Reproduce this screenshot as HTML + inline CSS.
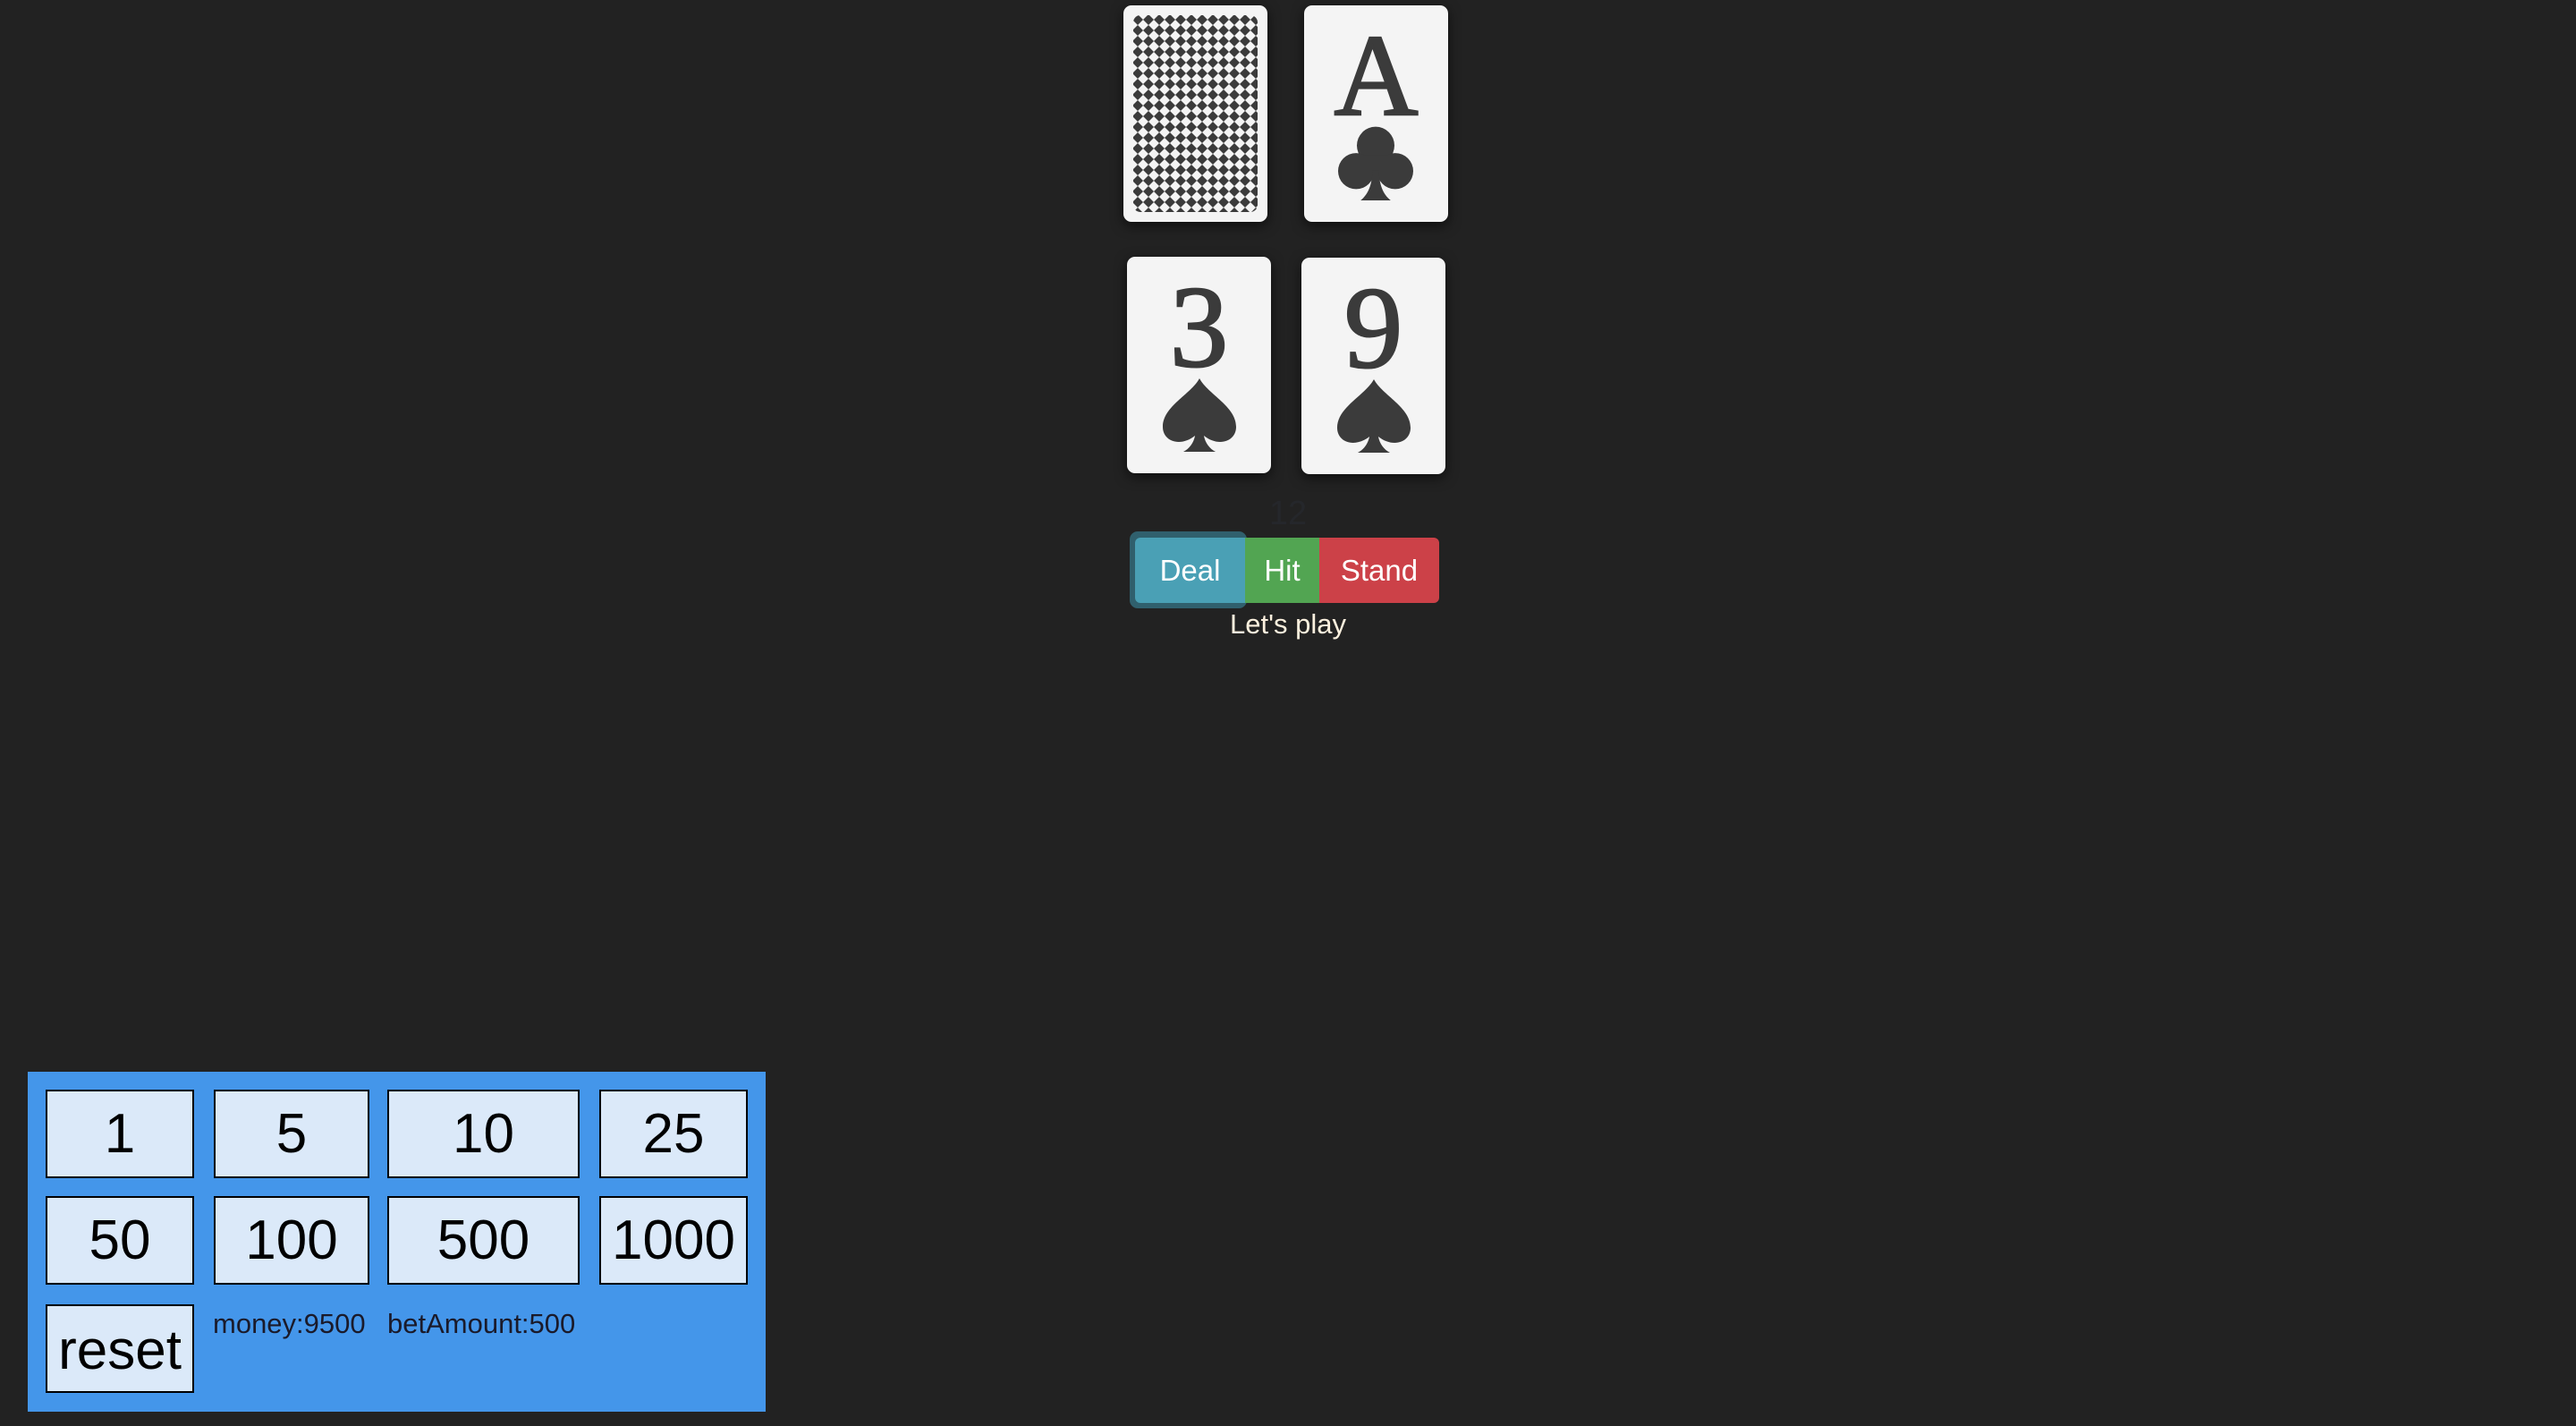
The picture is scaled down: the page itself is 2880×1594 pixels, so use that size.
<!DOCTYPE html>
<html><head><meta charset="utf-8">
<style>
html,body{margin:0;padding:0;background:#222;width:2880px;height:1594px;overflow:hidden;font-family:"Liberation Sans",sans-serif;}
.card{position:absolute;width:161px;height:242px;background:#f4f4f4;border-radius:9px;box-shadow:0 4px 14px rgba(0,0,0,.6);color:#3b3b3b;text-align:center;}
.rank{position:absolute;left:0;right:0;top:14px;font-family:"Liberation Serif",serif;font-size:130px;line-height:130px;-webkit-text-stroke:2.5px #3b3b3b;}
.suit{position:absolute;left:40px;top:132px;}
.btn{position:absolute;top:601px;height:73px;color:#fff;font-size:33px;line-height:73px;text-align:center;}
.panel{position:absolute;left:31px;top:1198px;width:825px;height:380px;background:#4496ea;}
.b{position:absolute;box-sizing:border-box;border:2px solid #000;background:#dbe9f9;color:#000;font-size:62px;text-align:center;line-height:96px;height:99px;}
.t{position:absolute;top:1462px;font-size:31px;color:#1a1a2a;}
</style></head><body>
<svg width="0" height="0" style="position:absolute">
<defs>
<symbol id="spade" viewBox="0 0 100 100"><path d="M50 0 C38 22 0 38 0 66 C0 86 24 94 44 78 C42 88 36 96 28 100 L72 100 C64 96 58 88 56 78 C76 94 100 86 100 66 C100 38 62 22 50 0 Z" fill="#3b3b3b"/></symbol>
<symbol id="club" viewBox="0 0 100 100"><circle cx="50" cy="27" r="25" fill="#3b3b3b"/><circle cx="24" cy="61" r="24" fill="#3b3b3b"/><circle cx="76" cy="61" r="24" fill="#3b3b3b"/><rect x="34" y="40" width="32" height="26" fill="#3b3b3b"/><path d="M46 60 L54 60 C55 80 60 92 70 100 L30 100 C40 92 45 80 46 60Z" fill="#3b3b3b"/></symbol>
<pattern id="p" width="12" height="12" patternUnits="userSpaceOnUse" x="10" y="10"><rect width="12" height="12" fill="#f4f4f4"/><polygon points="6,0 12,6 6,12 0,6" fill="#3b3b3b"/></pattern>
</defs></svg>
<div class="card" style="left:1256px;top:6px;">
<svg width="161" height="242" style="position:absolute;left:0;top:0">
<rect x="11" y="11" width="139" height="220" rx="8" fill="url(#p)"/>
</svg></div>
<div class="card" style="left:1458px;top:6px;"><div class="rank">A</div><svg class="suit" style="left:38px;top:128px" width="84" height="96"><use href="#club" width="84" height="96"/></svg></div>
<div class="card" style="left:1260px;top:287px;"><div class="rank">3</div><svg class="suit" width="82" height="90"><use href="#spade" width="82" height="90"/></svg></div>
<div class="card" style="left:1455px;top:288px;"><div class="rank">9</div><svg class="suit" width="82" height="90"><use href="#spade" width="82" height="90"/></svg></div>
<div style="position:absolute;left:1390px;top:552px;width:100px;text-align:center;color:#25272b;font-size:38px;line-height:44px;">12</div>
<div style="position:absolute;left:1263px;top:594px;width:131px;height:86px;border-radius:9px;background:#30606d;"></div>
<div class="btn" style="left:1269px;width:123px;background:#4aa0b5;border-radius:6px 0 0 6px;">Deal</div>
<div class="btn" style="left:1392px;width:83px;background:#52a552;">Hit</div>
<div class="btn" style="left:1475px;width:134px;background:#cc4148;border-radius:0 6px 6px 0;">Stand</div>
<div style="position:absolute;left:1340px;top:680px;width:200px;text-align:center;color:#fbf0de;font-size:31px;">Let's play</div>
<div class="panel"></div>
<div class="b" style="left:51px;top:1218px;width:166px;">1</div>
<div class="b" style="left:239px;top:1218px;width:174px;">5</div>
<div class="b" style="left:433px;top:1218px;width:215px;">10</div>
<div class="b" style="left:670px;top:1218px;width:166px;">25</div>
<div class="b" style="left:51px;top:1337px;width:166px;">50</div>
<div class="b" style="left:239px;top:1337px;width:174px;">100</div>
<div class="b" style="left:433px;top:1337px;width:215px;">500</div>
<div class="b" style="left:670px;top:1337px;width:166px;">1000</div>
<div class="b" style="left:51px;top:1458px;width:166px;line-height:100px;">reset</div>
<div class="t" style="left:238px;">money:9500</div>
<div class="t" style="left:433px;">betAmount:500</div>
</body></html>
